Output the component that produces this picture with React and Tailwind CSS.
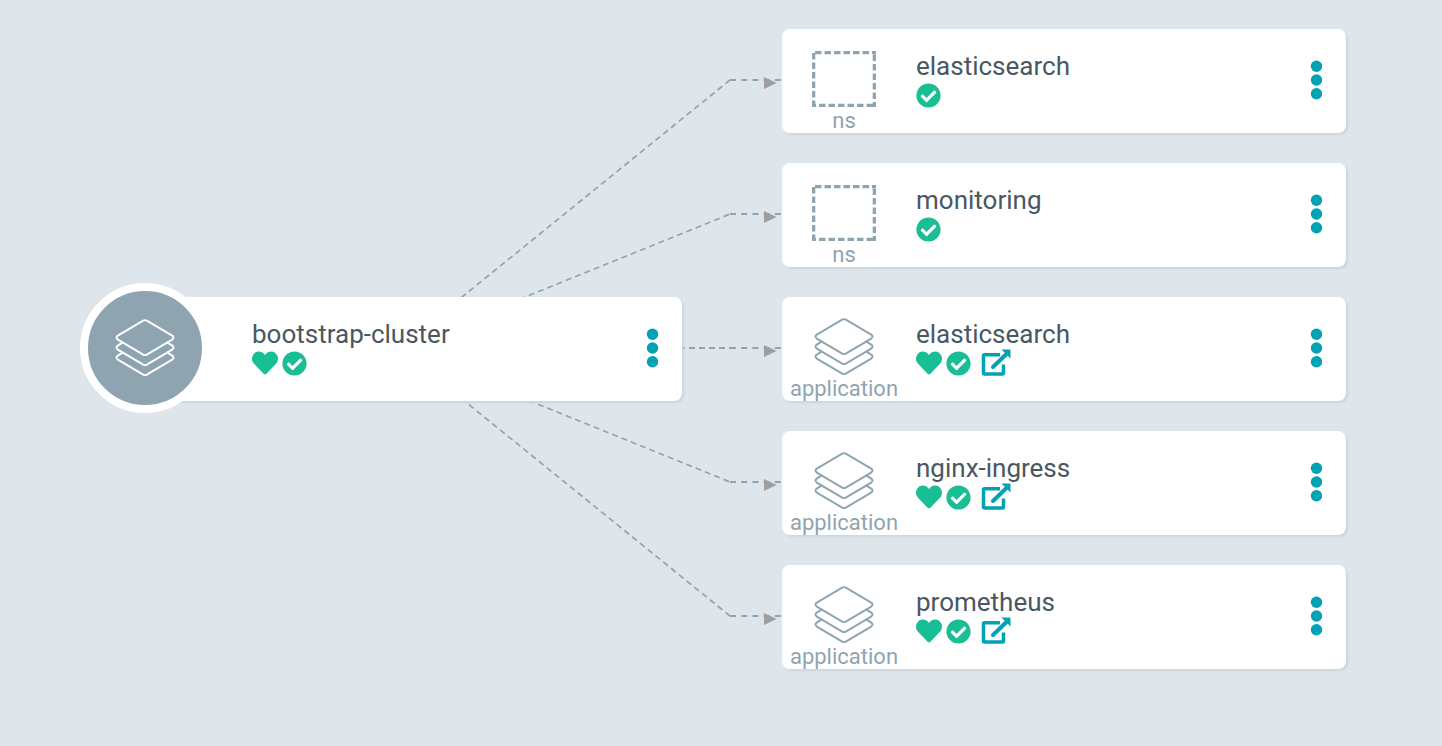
import { FaHeart, FaCheckCircle } from 'react-icons/fa';

const resources = [
  { name: 'elasticsearch', kind: 'ns' },
  { name: 'monitoring', kind: 'ns' },
  { name: 'elasticsearch', kind: 'application' },
  { name: 'nginx-ingress', kind: 'application' },
  { name: 'prometheus', kind: 'application' },
];

function LayersIcon({ className }) {
  return (
    <svg viewBox="0 0 60 58" fill="none" stroke="currentColor" strokeWidth="1.9" strokeLinejoin="round" strokeLinecap="round" className={className} aria-hidden="true">
      <path d="M28.2 1.600Q30 .600 31.800 1.600L57.200 16.600Q59.800 18.600 57.200 20.600L31.800 35.600Q30 36.600 28.200 35.600L2.800 20.600Q.200 18.600 2.800 16.600Z" />
      <path d="M7.500 23.600 2.800 26.600Q.200 28.600 2.800 30.600L28.200 45.600Q30 46.600 31.800 45.600L57.200 30.600Q59.800 28.600 57.200 26.600L52.500 23.600" />
      <path d="M7.500 33.600 2.800 36.600Q.200 38.600 2.800 40.600L28.200 55.600Q30 56.600 31.800 55.600L57.200 40.600Q59.800 38.600 57.200 36.600L52.500 33.600" />
    </svg>
  );
}

function NamespaceIcon() {
  return (
    <svg viewBox="0 0 64 56" fill="none" stroke="currentColor" strokeWidth="3.4" className="h-14 w-16" aria-hidden="true">
      <path d="M3 1.600H64" strokeDasharray="6.500 3" />
      <path d="M62.400 3.500V56" strokeDasharray="6.500 3" />
      <path d="M61 54.400H0" strokeDasharray="6.500 3" />
      <path d="M1.600 56V2" strokeDasharray="6.500 3" />
    </svg>
  );
}

function ExternalIcon() {
  return (
    <svg viewBox="0 0 30 28" className="h-7 w-[30px]" fill="none" stroke="currentColor" aria-hidden="true">
      <path d="M19 5.700H3.500Q2.500 5.700 2.500 6.700V24Q2.500 25 3.500 25H21.500Q22.500 25 22.500 24V15.500" strokeWidth="3.500" />
      <path d="M12 18 26 4.500" strokeWidth="4" strokeLinecap="round" />
      <path d="M20.500 .500H28.500Q29.500 .500 29.500 1.500V9.500Z" fill="currentColor" stroke="none" />
    </svg>
  );
}

function MenuButton({ name }) {
  return (
    <button type="button" aria-label={'Actions for ' + name} className="mr-6 mb-0.5 flex cursor-pointer flex-col items-center text-[#00a2b3]">
      <svg viewBox="0 0 12 40" className="h-10 w-3" fill="currentColor" aria-hidden="true">
        <circle cx="6.500" cy="6.300" r="5.700" />
        <circle cx="6.500" cy="20" r="5.700" />
        <circle cx="6.500" cy="33.700" r="5.700" />
      </svg>
    </button>
  );
}

function Card({ name, kind, healthy, link, children }) {
  return (
    <article className="relative flex h-[104px] w-[564px] items-center rounded-lg bg-white shadow-[2px_2px_2px_#ccd6dd]">
      {children || (
        <div className="flex w-[124px] shrink-0 flex-col items-center self-start pt-[22px] text-[#8fa4b1]">
          {kind === 'ns' ? <NamespaceIcon /> : <LayersIcon className="-mt-px h-[58px] w-[60px] -mb-px" />}
          <span className="text-[22px] leading-7">{kind}</span>
        </div>
      )}
      <div className="flex flex-1 flex-col self-start pt-[22px] pl-2.5">
        <h2 className="text-[26px] leading-[30px] text-[#495763]">{name}</h2>
        <div className="flex h-7 items-center gap-1 text-[#18be94]">
          {healthy && <FaHeart className="size-[26px]" aria-label="Healthy" />}
          <FaCheckCircle className="size-[25px]" aria-label="Synced" />
          {link && (
            <a href="#open" aria-label={'Open ' + name} className="ml-1.5 text-[#00a2b3]">
              <ExternalIcon />
            </a>
          )}
        </div>
      </div>
      <MenuButton name={name} />
    </article>
  );
}

function Edges() {
  return (
    <svg className="absolute top-0 left-0 h-[640px] w-[664px]" viewBox="0 0 664 640" fill="none" aria-hidden="true">
      {resources.map((_, i) => {
        const y = 51 + i * 134;
        return (
          <g key={i}>
            <path d={`M281 319L612 ${y}`} stroke="#8fa4b1" strokeWidth={i === 2 ? 2 : 1.7} strokeDasharray="6 4" />
            <path d={`M612 ${y}H664`} stroke="#8fa4b1" strokeWidth="2" strokeDasharray="6 5.200" />
            <path d={`M646 ${y - 3}L658.500 ${y + 3}L646 ${y + 9}Z`} fill="#9f9f9f" />
          </g>
        );
      })}
    </svg>
  );
}

export default function App() {
  return (
    <main className="min-h-screen overflow-x-auto bg-[#dee6eb] pt-[29px] pb-[77px] pl-[118px] font-[Roboto,sans-serif]">
      <div className="relative flex w-max items-center gap-[100px]">
        <Edges />
        <Card name="bootstrap-cluster" healthy>
          <div className="w-[124px] shrink-0">
            <div className="absolute -top-3.5 -left-[38px] flex size-[130px] items-center justify-center rounded-full border-8 border-white bg-[#8fa4b1] text-white">
              <LayersIcon className="h-[58px] w-[60px]" />
            </div>
          </div>
        </Card>
        <div className="flex flex-col gap-[30px]">
          {resources.map((r) => (
            <Card key={r.name + r.kind} {...r} healthy={r.kind === 'application'} link={r.kind === 'application'} />
          ))}
        </div>
      </div>
    </main>
  );
}
